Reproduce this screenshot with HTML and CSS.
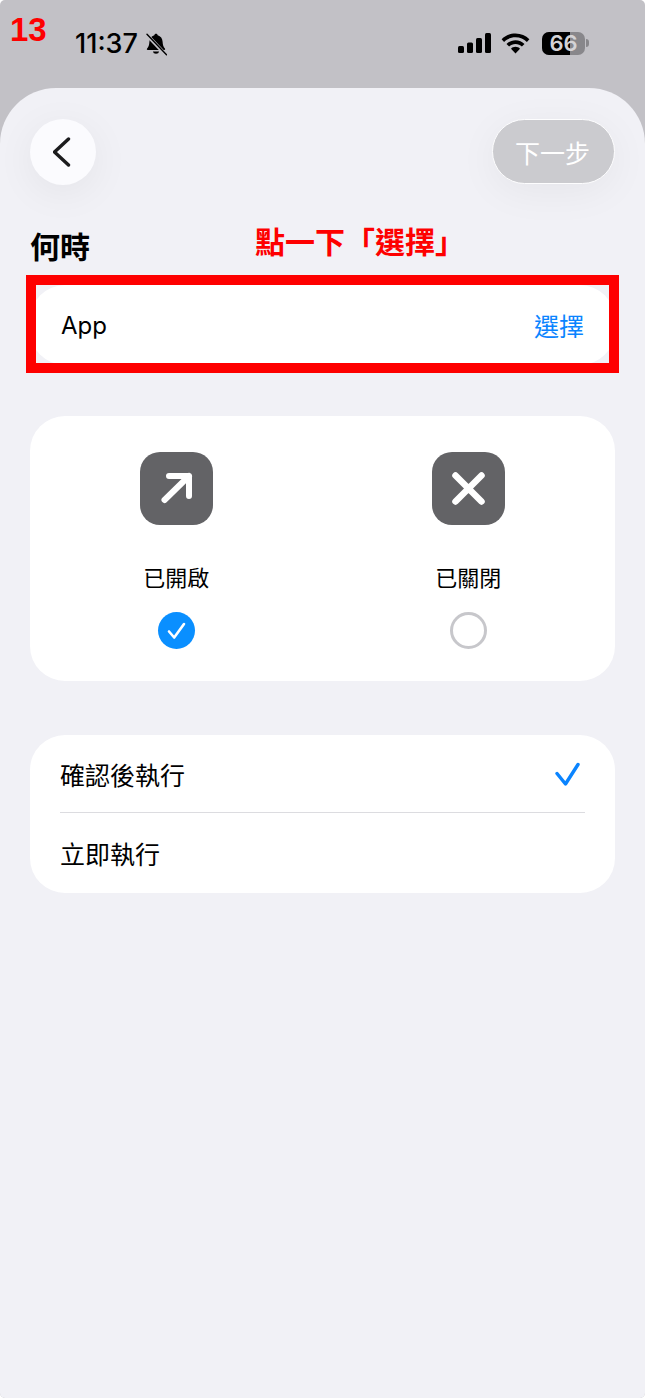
FILE: index.html
```html
<!DOCTYPE html>
<html lang="zh-Hant">
<head>
<meta charset="utf-8">
<title>何時</title>
<link rel="stylesheet" href="styles.css">
</head>
<body>
<div class="screen">
  <header class="status">
    <div class="status-left">
      <span class="time">11:37</span>
      <svg class="bell" width="22" height="23" viewBox="0 0 22 23"><path d="M11 .8c-1 0-1.600.7-1.700 1.500C6.300 3.100 4.600 5.600 4.400 8.800c-.2 3.300-.8 5.200-2.300 6.700-.6.600-.2 1.500.6 1.500h16.600c.8 0 1.200-.9.6-1.500-1.500-1.500-2.100-3.400-2.300-6.700-.2-3.200-1.900-5.700-4.900-6.500C12.600 1.500 12 .8 11 .8z" fill="#000"/><path d="M7.800 18.400a3.300 3 0 0 0 6.400 0z" fill="#000"/><path d="M1.500 1.500l19 20" stroke="#c2c1c6" stroke-width="3.600"/><path d="M2 1.300l19.500 20.400" stroke="#000" stroke-width="1.400" stroke-linecap="round"/></svg>
    </div>
    <div class="status-right">
      <svg width="33" height="21" viewBox="0 0 33 21"><rect x="0" y="13" width="6" height="7" rx="1.500"/><rect x="9" y="9.500" width="6" height="10.500" rx="1.500"/><rect x="18" y="5" width="6" height="15" rx="1.500"/><rect x="27" y="0" width="6" height="20" rx="1.500"/></svg>
      <svg class="wifi" width="29" height="21" viewBox="0 0 29 21"><path d="M14.500 0.500C9 .5 4.200 2.600.6 6.200l2.500 2.700C6 6 10 4.300 14.500 4.300S23 6 25.900 8.900l2.500-2.700C24.800 2.600 20 .5 14.500.5z"/><path d="M14.500 7.200c-3.500 0-6.700 1.400-9 3.700l2.600 2.700c1.600-1.600 3.900-2.600 6.400-2.600s4.800 1 6.400 2.600l2.600-2.700c-2.300-2.300-5.500-3.700-9-3.700z"/><path d="M14.500 13.800c-1.800 0-3.400.7-4.500 1.900l4.500 4.800 4.500-4.800c-1.100-1.200-2.700-1.900-4.500-1.900z"/></svg>
      <div class="battery">
        <div class="battery-body"><div class="battery-fill"></div><span class="battery-num">66</span></div>
        <div class="battery-cap"></div>
      </div>
    </div>
  </header>

  <main class="sheet">
    <nav class="nav">
      <button class="back" type="button" aria-label="返回">
        <svg width="20" height="30" viewBox="0 0 20 30"><path d="M15.500 2L1.500 15l14 13" fill="none" stroke="#1c1c1e" stroke-width="3.400" stroke-linecap="round" stroke-linejoin="round"/></svg>
      </button>
      <button class="next" type="button">下一步</button>
    </nav>

    <h1 class="title">何時</h1>

    <section class="card app-row">
      <span class="app-label">App</span>
      <span class="app-choose">選擇</span>
    </section>

    <section class="card states">
      <div class="state">
        <div class="state-icon">
          <svg width="73" height="73" viewBox="0 0 73 73"><path d="M24.500 48L49 24M29 24H49V44" fill="none" stroke="#fff" stroke-width="6" stroke-linecap="round" stroke-linejoin="round"/></svg>
        </div>
        <div class="state-label">已開啟</div>
        <div class="radio radio-on">
          <svg width="37" height="37" viewBox="0 0 37 37"><path d="M11 19.500l5.200 6L26 12" fill="none" stroke="#fff" stroke-width="2.600" stroke-linecap="round" stroke-linejoin="round"/></svg>
        </div>
      </div>
      <div class="state">
        <div class="state-icon">
          <svg width="73" height="73" viewBox="0 0 73 73"><path d="M23.500 23.500L49.500 49.500M49.500 23.500L23.500 49.500" fill="none" stroke="#fff" stroke-width="6.500" stroke-linecap="round"/></svg>
        </div>
        <div class="state-label">已關閉</div>
        <div class="radio radio-off"></div>
      </div>
    </section>

    <section class="card options">
      <div class="option option-first">
        <span>確認後執行</span>
        <svg width="26" height="26" viewBox="0 0 26 26"><path d="M2 12.500L10.500 23 23 3.500" fill="none" stroke="#0a84ff" stroke-width="3.400" stroke-linecap="round" stroke-linejoin="round"/></svg>
      </div>
      <div class="option-divider"></div>
      <div class="option option-second"><span>立即執行</span></div>
    </section>
  </main>

  <div class="step-num">13</div>
  <div class="hint">點一下「選擇」</div>
  <div class="highlight"></div>
</div>
</body>
</html>
```

FILE: styles.css
```css
* { box-sizing: border-box; }
html, body { margin: 0; padding: 0; }
body {
  width: 645px;
  height: 1398px;
  overflow: hidden;
  background: #fff;
  font-family: "Liberation Sans", "Noto Sans CJK TC", sans-serif;
  color: #000;
}
.screen {
  position: relative;
  width: 645px;
  height: 1398px;
  display: flex;
  flex-direction: column;
  background: #c2c1c6;
  border-radius: 5px;
  overflow: hidden;
}
.status {
  height: 88px;
  flex: none;
  display: flex;
  justify-content: space-between;
  align-items: flex-start;
  padding: 30px 56px 0 75px;
}
.status-left { display: flex; align-items: center; gap: 7px; height: 28px; }
.time { font-family: Inter, "Liberation Sans", sans-serif; font-size: 27px; font-weight: 500; line-height: 28px; }
.status-right { display: flex; align-items: center; gap: 9px; height: 28px; margin-top: -1px; }
.wifi { margin-left: 1px; }
.battery { display: flex; align-items: center; gap: 1px; margin-left: 3px; }
.battery-body {
  position: relative;
  width: 43px;
  height: 23px;
  border-radius: 7px;
  background: #88878b;
  display: flex;
  align-items: center;
  justify-content: center;
}
.battery-fill { position: absolute; left: 0; top: 0; bottom: 0; width: 28px; background: #000; border-radius: 7px 0 0 7px; }
.battery-num { position: relative; font-family: Inter, "Liberation Sans", sans-serif; font-size: 22px; font-weight: 600; color: #d4d3d6; line-height: 23px; }
.battery-cap { width: 3px; height: 8px; background: #88878b; border-radius: 0 3px 3px 0; }

.sheet {
  flex: 1;
  display: flex;
  flex-direction: column;
  background: #f1f1f6;
  border-radius: 56px 56px 0 0;
  padding: 30px 30px 0;
}
.nav { display: flex; justify-content: space-between; align-items: center; height: 67px; }
.back {
  width: 66px;
  height: 66px;
  padding: 0;
  border: 0;
  border-radius: 50%;
  background: #fbfbfe;
  box-shadow: 0 8px 40px rgba(0, 0, 0, .06);
  display: flex;
  align-items: center;
  justify-content: center;
}
.next {
  width: 123px;
  height: 65px;
  border: 1px solid #fdfdfe;
  border-radius: 33px;
  background: #cbcbcf;
  box-shadow: 0 8px 40px rgba(0, 0, 0, .05);
  color: #fff;
  font-family: "Noto Sans CJK TC", sans-serif;
  font-size: 25px;
  padding: 0 2px 0 0;
}
.title { margin: 40px 0 0; height: 40px; font-family: "Noto Sans CJK TC", sans-serif; font-size: 30px; font-weight: 700; line-height: 40px; }
.card { background: #fff; border-radius: 35px; }
.app-row {
  margin-top: 20px;
  height: 80px;
  display: flex;
  justify-content: space-between;
  align-items: center;
  padding: 0 31px;
  font-size: 24px;
}
.app-label { font-family: Inter, "Liberation Sans", sans-serif; font-weight: 400; }
.app-choose { font-size: 25px; color: #0a84ff; font-family: "Noto Sans CJK TC", sans-serif; }
.states { margin-top: 51px; height: 265px; display: grid; grid-template-columns: 1fr 1fr; padding: 36px 0 0; }
.state { display: flex; flex-direction: column; align-items: center; }
.state:first-child { padding-left: 1px; }
.state-icon { width: 73px; height: 73px; border-radius: 20px; background: #636366; }
.state-icon svg { display: block; }
.state-label { margin: 34px 1px 0 0; height: 34px; font-family: "Noto Sans CJK TC", sans-serif; font-size: 22px; line-height: 34px; }
.radio { margin-top: 19px; width: 37px; height: 37px; border-radius: 50%; }
.radio svg { display: block; }
.radio-on { background: #0a8fff; }
.radio-off { border: 3px solid #c7c7cb; }
.options { margin-top: 54px; height: 158px; display: flex; flex-direction: column; padding: 0 30px; }
.option { display: flex; justify-content: space-between; align-items: center; font-family: "Noto Sans CJK TC", sans-serif; font-size: 25px; }
.option-first { height: 77px; padding-right: 4px; }
.option-second { height: 80px; }
.option-divider { height: 1px; background: #dcdce0; flex: none; }

.step-num { position: absolute; left: 10px; top: 12px; color: #fe0000; font-family: "Liberation Sans", sans-serif; font-size: 33px; font-weight: 700; line-height: 36px; }
.hint { position: absolute; left: 255px; top: 221px; color: #fe0000; font-family: "Noto Sans CJK TC", sans-serif; font-size: 30px; font-weight: 700; line-height: 38px; white-space: nowrap; }
.highlight { position: absolute; left: 26px; top: 275px; width: 593px; height: 98px; border: 10px solid #fe0000; }
```
